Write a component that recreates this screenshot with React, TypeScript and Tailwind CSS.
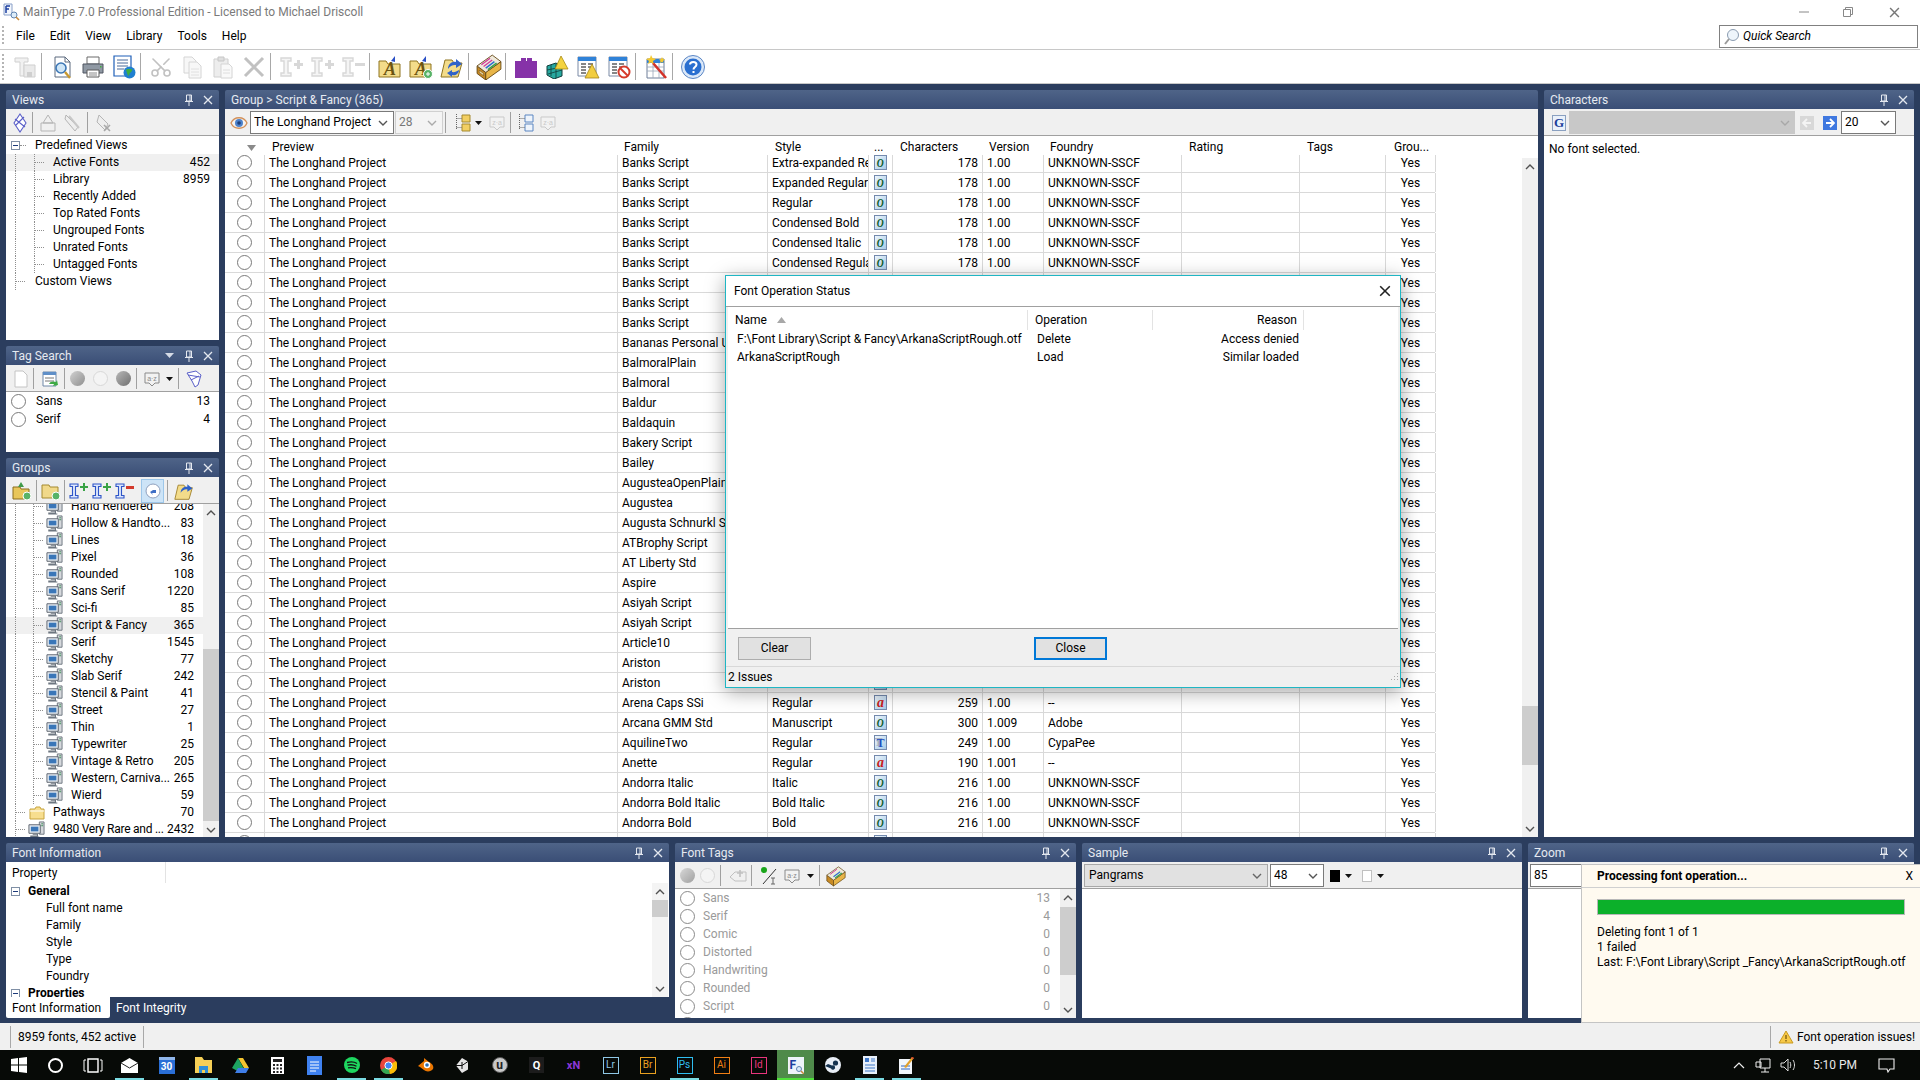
import type { ReactNode } from 'react';
import { Scissors } from 'lucide-react';

type Row = { family: string; style?: string; icon?: 'o' | 'a' | 't'; chars?: number; version?: string; foundry?: string };

const hiddenFamilies = [
  'Banks Script', 'Banks Script', 'Banks Script', 'Bananas Personal Use', 'BalmoralPlain', 'Balmoral', 'Baldur', 'Baldaquin',
  'Bakery Script', 'Bailey', 'AugusteaOpenPlain', 'Augustea', 'Augusta Schnurkl Script', 'ATBrophy Script', 'AT Liberty Std',
  'Aspire', 'Asiyah Script', 'Asiyah Script', 'Article10', 'Ariston', 'Ariston',
];

const fontRows: Row[] = [
  { family: 'Banks Script', style: 'Extra-expanded Regular', icon: 'o', chars: 178, version: '1.00', foundry: 'UNKNOWN-SSCF' },
  { family: 'Banks Script', style: 'Expanded Regular', icon: 'o', chars: 178, version: '1.00', foundry: 'UNKNOWN-SSCF' },
  { family: 'Banks Script', style: 'Regular', icon: 'o', chars: 178, version: '1.00', foundry: 'UNKNOWN-SSCF' },
  { family: 'Banks Script', style: 'Condensed Bold', icon: 'o', chars: 178, version: '1.00', foundry: 'UNKNOWN-SSCF' },
  { family: 'Banks Script', style: 'Condensed Italic', icon: 'o', chars: 178, version: '1.00', foundry: 'UNKNOWN-SSCF' },
  { family: 'Banks Script', style: 'Condensed Regular', icon: 'o', chars: 178, version: '1.00', foundry: 'UNKNOWN-SSCF' },
  ...hiddenFamilies.map((family): Row => ({ family, icon: 'o' })),
  { family: 'Arena Caps SSi', style: 'Regular', icon: 'a', chars: 259, version: '1.00', foundry: '--' },
  { family: 'Arcana GMM Std', style: 'Manuscript', icon: 'o', chars: 300, version: '1.009', foundry: 'Adobe' },
  { family: 'AquilineTwo', style: 'Regular', icon: 't', chars: 249, version: '1.00', foundry: 'CypaPee' },
  { family: 'Anette', style: 'Regular', icon: 'a', chars: 190, version: '1.001', foundry: '--' },
  { family: 'Andorra Italic', style: 'Italic', icon: 'o', chars: 216, version: '1.00', foundry: 'UNKNOWN-SSCF' },
  { family: 'Andorra Bold Italic', style: 'Bold Italic', icon: 'o', chars: 216, version: '1.00', foundry: 'UNKNOWN-SSCF' },
  { family: 'Andorra Bold', style: 'Bold', icon: 'o', chars: 216, version: '1.00', foundry: 'UNKNOWN-SSCF' },
];

const groups: [string, number][] = [
  ['Hand Rendered', 208], ['Hollow & Handto...', 83], ['Lines', 18], ['Pixel', 36], ['Rounded', 108], ['Sans Serif', 1220],
  ['Sci-fi', 85], ['Script & Fancy', 365], ['Serif', 1545], ['Sketchy', 77], ['Slab Serif', 242], ['Stencil & Paint', 41],
  ['Street', 27], ['Thin', 1], ['Typewriter', 25], ['Vintage & Retro', 205], ['Western, Carniva...', 265], ['Wierd', 59],
];

const views: [string, number?][] = [
  ['Active Fonts', 452], ['Library', 8959], ['Recently Added'], ['Top Rated Fonts'], ['Ungrouped Fonts'], ['Unrated Fonts'], ['Untagged Fonts'],
];

const fontTags: [string, number][] = [
  ['Sans', 13], ['Serif', 4], ['Comic', 0], ['Distorted', 0], ['Handwriting', 0], ['Rounded', 0], ['Script', 0],
];

function Svg({ size = 24, children }: { size?: number; children: ReactNode }) {
  return <svg width={size} height={size} viewBox="0 0 24 24" className="shrink-0">{children}</svg>;
}

function Pin() {
  return (
    <svg width="10" height="12" viewBox="0 0 10 12">
      <path d="M2.5 1h5v6h-5zM6 1v6M1 7.5h8M5 8v4" fill="none" stroke="#e4e8ef" strokeWidth="1" />
    </svg>
  );
}

function CloseX({ color = '#e4e8ef', size = 10 }: { color?: string; size?: number }) {
  return (
    <svg width={size} height={size} viewBox="0 0 10 10">
      <path d="M1 1l8 8M9 1l-8 8" stroke={color} strokeWidth="1.3" fill="none" />
    </svg>
  );
}

function Chevron({ dir = 'down', color = '#666' }: { dir?: 'up' | 'down'; color?: string }) {
  return (
    <svg width="10" height="6" viewBox="0 0 10 6" className="shrink-0">
      <path d={dir === 'down' ? 'M1 1l4 4 4-4' : 'M1 5l4-4 4 4'} fill="none" stroke={color} strokeWidth="1.4" />
    </svg>
  );
}

function Caret() {
  return <svg width="7" height="4" viewBox="0 0 7 4" className="shrink-0"><path d="M0 0h7L3.5 4z" fill="#111" /></svg>;
}

function Gripper({ className }: { className: string }) {
  return <span className={`block w-[2px] shrink-0 border-l-2 border-dotted border-[#b4b4b4] ${className}`} />;
}

function Radio({ dim }: { dim?: boolean }) {
  return <span className={`block w-[15px] h-[15px] shrink-0 rounded-full border-[1.5px] bg-white ${dim ? 'border-[#8a8a8a]' : 'border-[#7a7a7a]'}`} />;
}

function Panel({ title, caret, className, children }: { title: string; caret?: boolean; className: string; children: ReactNode }) {
  return (
    <section className={`flex flex-col min-h-0 ${className}`}>
      <header className="h-[19px] shrink-0 flex items-center pl-[6px] pr-[6px] rounded-t-[2px] bg-gradient-to-b from-[#4f6488] to-[#3a4e76] text-[#e6eaf1]">
        <span className="flex-1 truncate pt-px">{title}</span>
        {caret && <svg width="9" height="5" viewBox="0 0 9 5" className="mr-[10px]"><path d="M0 0h9L4.5 5z" fill="#d5dbe6" /></svg>}
        {title !== 'Group > Script & Fancy (365)' && (
          <span className="flex items-center gap-[9px]"><Pin /><CloseX /></span>
        )}
      </header>
      {children}
    </section>
  );
}

function PanelBar({ className = '', children }: { className?: string; children?: ReactNode }) {
  return <div className={`h-[27px] shrink-0 flex items-center pt-px bg-[#f0f0f0] border-b border-[#a0a0a0] ${className}`}>{children}</div>;
}

function Sep({ className = 'mx-[3px]' }: { className?: string }) {
  return <span className={`block w-px h-[21px] shrink-0 bg-[#a0a0a0] ${className}`} />;
}

function ScrollBar({ before, thumb, className = '' }: { before: number; thumb: number; className?: string }) {
  return (
    <div className={`w-4 shrink-0 flex flex-col bg-[#f0f0f0] ${className}`}>
      <div className="h-[17px] shrink-0 flex items-center justify-center"><Chevron dir="up" color="#505050" /></div>
      <div className="shrink-0" style={{ height: before }} />
      <div className="shrink-0 bg-[#cdcdcd]" style={{ height: thumb }} />
      <div className="flex-1" />
      <div className="h-[17px] shrink-0 flex items-center justify-center"><Chevron color="#505050" /></div>
    </div>
  );
}

function FontKind({ kind }: { kind?: Row['icon'] }) {
  const letter = kind === 'a' ? 'a' : kind === 't' ? 'T' : 'O';
  const look =
    kind === 'a'
      ? 'italic text-[14px] text-[#c8201c]'
      : kind === 't'
        ? 'text-[12px] text-[#1f4fc0] [text-shadow:-2px_-1px_0_#a8b0bc]'
        : 'italic text-[12px] text-[#0b5a2a] scale-x-[0.8]';
  return (
    <span className="w-[13px] h-[15px] flex items-center justify-center overflow-hidden border border-[#7389ad] bg-gradient-to-br from-[#eef5fb] to-[#a6cbe8]">
      <span className={`block leading-none font-black [font-family:'Liberation_Serif',serif] ${look}`}>{kind ? letter : ''}</span>
    </span>
  );
}

function Doc({ fill = '#fff', stroke = '#9a9a9a' }: { fill?: string; stroke?: string }) {
  return <path d="M5 2h10l5 5v15H5z M15 2v5h5" fill={fill} stroke={stroke} strokeWidth="1" />;
}

function IBeam({ sign, color = '#c8c8c8', signColor = '#c8c8c8' }: { sign: '+' | '-'; color?: string; signColor?: string }) {
  return (
    <Svg>
      <path d="M2 3h10v3H9v12h3v3H2v-3h3V6H2z" fill="#f2f2f2" stroke={color} strokeWidth="1.4" />
      {sign === '+' ? (
        <path d="M15 8h3V5h3v3h3v3h-3v3h-3v-3h-3z" fill={signColor} />
      ) : (
        <path d="M14 8h10v3H14z" fill={signColor} />
      )}
    </Svg>
  );
}

function FolderA({ plus }: { plus?: boolean }) {
  return (
    <Svg>
      <path d="M1 6h7l2 3h12v13H1z" fill="#f3dc8a" stroke="#8f7420" strokeWidth="1" />
      <text x="6" y="20" fontSize="18" fontWeight="bold" fontStyle="italic" fontFamily="Liberation Serif" fill="#6b5412">A</text>
      <path d="M17 1l-4 5 4 1z" fill="#2a4fc5" />
      {plus && <><circle cx="19" cy="19" r="4.5" fill="#58b368" stroke="#fff" /><path d="M17 19h4M19 17v4" stroke="#fff" /></>}
    </Svg>
  );
}

function FolderOpenArrow() {
  return (
    <Svg>
      <path d="M5 5h7l2 3h8l-4 14H1z" fill="#f3dc8a" stroke="#8f7420" strokeWidth="1" />
      <path d="M8 14c0-5 4-8 8-7V4l6 5-6 4v-3c-3-.5-6 1-8 4z" fill="#2f62c9" />
      <path d="M19 15c0 4-4 6-7 5v2l-5-4 5-3v2c2 .5 5-.5 7-2z" fill="#2f62c9" />
    </Svg>
  );
}

function Crate() {
  return (
    <Svg size={26}>
      <path d="M1 11L9 17v7L1 18z" fill="#c88a24" stroke="#5f4210" strokeWidth=".8" />
      <path d="M9 17L23 7v7L9 24z" fill="#e8b548" stroke="#5f4210" strokeWidth=".8" />
      <path d="M1 11L15 1l8 6L9 17z" fill="#efeadb" stroke="#5f4210" strokeWidth=".8" />
      <path d="M5 10l8-6M7 11.5l8-6" stroke="#d03a9a" strokeWidth="1.2" />
      <path d="M9 13l8-6" stroke="#2c6fd0" strokeWidth="1.4" />
      <path d="M11 14.5l8-6" stroke="#38a04a" strokeWidth="1.4" />
      <path d="M3 15l4 3v2l-4-3z" fill="#f6e3ad" stroke="#5f4210" strokeWidth=".5" />
    </Svg>
  );
}

function TableDoc({ badge }: { badge: 'warn' | 'no' }) {
  return (
    <Svg>
      <path d="M2 2h18v19H2z" fill="#fff" stroke="#7a8aa5" strokeWidth="1" />
      <path d="M2 2h18v4H2z" fill="#2f82d8" />
      <path d="M5 9h5M5 12h5M5 15h5M5 18h5M12 9h5M12 12h5" stroke="#5f5f5f" strokeWidth="1.3" />
      {badge === 'warn' ? (
        <path d="M16 9l7 14H9z" fill="#f2cd3f" stroke="#a58416" strokeWidth=".8" />
      ) : (
        <><circle cx="17" cy="17" r="5.5" fill="#fff" stroke="#d63b2b" strokeWidth="2" /><path d="M13 13l8 8" stroke="#d63b2b" strokeWidth="2" /></>
      )}
    </Svg>
  );
}

function Monitor({ size = 18 }: { size?: number }) {
  return (
    <svg width={size} height={size} viewBox="0 0 18 18" className="shrink-0">
      <path d="M12 1h5v13h-5z" fill="#d5d8dc" stroke="#6d7680" />
      <path d="M14 3h2M14 5h2" stroke="#3a8a55" />
      <path d="M1 4h12v9H1z" fill="#e8edf3" stroke="#59616b" />
      <path d="M3 6h8v5H3z" fill="#3a76b8" />
      <path d="M5 14h5v2H3v1h9" fill="none" stroke="#6d7680" strokeWidth="1.2" />
    </svg>
  );
}

function Guide({ line = true, stub, w }: { line?: boolean; stub?: number; w: string }) {
  return (
    <span className={`h-full shrink-0 flex items-center ${w} ${line ? 'border-l border-dotted border-[#8f8f8f]' : ''}`}>
      {stub ? <span className="block border-t border-dotted border-[#8f8f8f]" style={{ width: stub }} /> : null}
    </span>
  );
}

function Slot({ disabled, children }: { disabled?: boolean; children: ReactNode }) {
  return <div className={`w-[31px] shrink-0 flex items-center justify-center ${disabled ? 'opacity-70' : ''}`}>{children}</div>;
}

function TopSep() {
  return <span className="block w-px h-[27px] ml-px mr-1 shrink-0 bg-[#a8a8a8]" />;
}

function MainToolbar() {
  return (
    <div className="h-[34px] shrink-0 flex items-center pl-[2px] bg-white border-b border-[#c8c8c8]">
      <Gripper className="h-[26px] mr-[5px]" />
      <Slot disabled>
        <Svg><path d="M2 3h13v4h-4v14H7V7H2z" fill="#ececec" stroke="#bdbdbd" /><path d="M11 10h11v12H11z" fill="#e2e2e2" stroke="#bdbdbd" /><path d="M14 17h5v5h-5z" fill="#bcbcbc" /></Svg>
      </Slot>
      <TopSep />
      <Slot>
        <Svg><Doc stroke="#5d6b7e" /><circle cx="11" cy="13" r="5" fill="#cfe6f7" stroke="#3c76b5" strokeWidth="1.6" /><path d="M15 17l5 6" stroke="#c9992f" strokeWidth="2.4" /></Svg>
      </Slot>
      <Slot>
        <Svg><path d="M6 2h12v7H6z" fill="#fff" stroke="#6a6a6a" /><path d="M2 9h20v9H2z" fill="#8f98a3" stroke="#4f5560" /><path d="M6 15h12v7H6z" fill="#fff" stroke="#5a5a5a" /><path d="M8 18h8M8 20h8" stroke="#8a8a8a" /><path d="M19 11h1.5v1.5H19z" fill="#3fae3f" /></Svg>
      </Slot>
      <Slot>
        <Svg><path d="M2 1h17v20H2z" fill="#fff" stroke="#1f5fb8" strokeWidth="1.2" /><path d="M5 5h11M5 8h11M5 11h11M5 14h7" stroke="#4a6a9a" /><circle cx="17.5" cy="17.5" r="6" fill="#1f7fd0" /><path d="M14 15c2-2 5 0 6-1 1 3-3 3-3 7-2-1-2-4-3-6z" fill="#3fae3f" /></Svg>
      </Slot>
      <TopSep />
      <Slot disabled><Scissors size={24} strokeWidth={1.6} color="#a8a8a8" className="-rotate-90" /></Slot>
      <Slot disabled>
        <Svg><path d="M4 2h8l4 4v12H4z" fill="#f5f5f5" stroke="#c4c4c4" /><path d="M9 7h8l4 4v12H9z" fill="#f5f5f5" stroke="#c4c4c4" /><path d="M11 14h8M11 17h8M11 20h8" stroke="#d2d2d2" /></Svg>
      </Slot>
      <Slot disabled>
        <Svg><path d="M3 4h14v18H3z" fill="#e6e6e6" stroke="#bdbdbd" /><path d="M7 2h6v4H7z" fill="#d2d2d2" stroke="#b0b0b0" /><path d="M10 9h8l3 3v11H10z" fill="#f7f7f7" stroke="#c4c4c4" /><path d="M12 15h7M12 18h7" stroke="#d0d0d0" /></Svg>
      </Slot>
      <Slot disabled><svg width="22" height="22" viewBox="0 0 22 22"><path d="M2 2l18 18M20 2L2 20" stroke="#a8a8a8" strokeWidth="3" /></svg></Slot>
      <TopSep />
      <Slot disabled><IBeam sign="+" /></Slot>
      <Slot disabled><IBeam sign="+" /></Slot>
      <Slot disabled><IBeam sign="-" /></Slot>
      <TopSep />
      <Slot><FolderA /></Slot>
      <Slot><FolderA plus /></Slot>
      <Slot><FolderOpenArrow /></Slot>
      <TopSep />
      <Slot><Crate /></Slot>
      <TopSep />
      <Slot>
        <Svg><path d="M1 6h6V3h5v3h1V3h5v3h5v17H1z" fill="#8632a8" /></Svg>
      </Slot>
      <Slot>
        <Svg><path d="M2 11l9-3 6 4v9l-8 3-7-4z" fill="#27a9a0" stroke="#103c3a" /><path d="M6 10v11M11 9v14M2 15l15-3M3 19l14-4" stroke="#103c3a" strokeWidth=".8" /><path d="M16 1l7 13H10z" fill="#f4d33f" stroke="#a88a14" strokeWidth=".8" /></Svg>
      </Slot>
      <Slot><TableDoc badge="warn" /></Slot>
      <Slot><TableDoc badge="no" /></Slot>
      <TopSep />
      <Slot>
        <Svg><path d="M3 4h17v19H3z" fill="#fff" stroke="#6f7f99" /><path d="M3 4h17v4H3z" fill="#2f82d8" /><path d="M3 12h17M3 16h17M9 8v15M15 8v15" stroke="#9aa6b8" strokeWidth=".8" /><path d="M9 8l13 15" stroke="#d2322a" strokeWidth="2.6" /><path d="M7 0l1.5 3L12 4 9 6l.5 3L7 7.5 4 9l1-3-3-2 4-1zM18 2l1 2 2 .5-2 1.5.5 2-1.5-1-2 1 .5-2-1.5-1.5 2-.5z" fill="#f4c82f" /></Svg>
      </Slot>
      <TopSep />
      <Slot>
        <Svg><circle cx="12" cy="12" r="11.5" fill="#dbe8f8" stroke="#5a86c5" /><circle cx="12" cy="12" r="8.5" fill="#2a6fd0" /><path d="M9 9.5c0-3.5 6.5-3.5 6.5 0 0 2.5-3 2.5-3 5" fill="none" stroke="#fff" strokeWidth="2" /><path d="M11.5 16h2v2h-2z" fill="#fff" /></Svg>
      </Slot>
    </div>
  );
}

function Combo({ value, className, disabled }: { value: string; className: string; disabled?: boolean }) {
  return (
    <div className={`h-[23px] shrink-0 flex items-center pl-[3px] pr-[5px] border ${disabled ? 'border-[#d0d0d0] bg-[#f4f4f4] text-[#777]' : 'border-[#7a7a7a] bg-white'} ${className}`}>
      <span className="flex-1 truncate">{value}</span>
      <Chevron color={disabled ? '#aaa' : '#555'} />
    </div>
  );
}

function SmallGlyph({ tone = '#c9c9c9', label = 'z·a' }: { tone?: string; label?: string }) {
  return (
    <svg width="18" height="18" viewBox="0 0 18 18" className="shrink-0">
      <path d="M2 3h14v10h-4l-3 3-3-3H2z" fill="#f2f2f2" stroke={tone} />
      <text x="9" y="10.5" textAnchor="middle" fontSize="7" fontFamily="Liberation Sans" fill={tone}>{label}</text>
    </svg>
  );
}

function ViewsPanel() {
  return (
    <Panel title="Views" className="h-[250px]">
      <PanelBar className="pl-[6px]">
        <svg width="16" height="20" viewBox="0 0 16 20"><path d="M8 1l6 9-6 9-6-9zM3 6l10 8M4 12l8-8" fill="#fff" stroke="#5a5fc8" strokeWidth="1.1" /></svg>
        <Sep className="ml-[4px] mr-[6px]" />
        <svg width="18" height="20" viewBox="0 0 18 20"><path d="M2 10h14v8H2zM9 2l5 8H4z" fill="#f0f0f0" stroke="#b5b5b5" /></svg>
        <svg width="20" height="20" viewBox="0 0 20 20" className="ml-[6px]"><path d="M3 2l12 12-3 4L2 6z" fill="#eee" stroke="#b5b5b5" /><path d="M6 3l10 12" stroke="#c8c8c8" strokeWidth="2" /></svg>
        <Sep className="ml-[4px] mr-[6px]" />
        <svg width="18" height="20" viewBox="0 0 18 20"><path d="M5 2l9 9-3 6-8-8z" fill="#eee" stroke="#b5b5b5" /><path d="M10 12l6 6M16 12l-6 6" stroke="#a8a8a8" strokeWidth="1.6" /></svg>
      </PanelBar>
      <div className="flex-1 bg-white pt-px">
        <div className="h-[17px] flex items-center pl-[5px]">
          <span className="w-[9px] h-[9px] shrink-0 border border-[#7f8fa5] flex items-center justify-center"><span className="block w-[5px] h-px bg-[#1c3a7a]" /></span>
          <span className="w-[6px] border-t border-dotted border-[#8f8f8f]" />
          <span className="ml-[9px]">Predefined Views</span>
        </div>
        {views.map(([name, count], i) => (
          <div key={name} className={`h-[17px] flex items-center pl-[9px] pr-[9px] ${i === 0 ? 'bg-[#f0f0f0]' : ''}`}>
            <Guide w="w-[19px]" />
            <Guide w="w-[19px]" stub={9} />
            <span className="flex-1">{name}</span>
            {count && <span>{count}</span>}
          </div>
        ))}
        <div className="h-[17px] flex items-center pl-[9px]">
          <Guide w="w-[20px]" stub={9} />
          <span>Custom Views</span>
        </div>
      </div>
    </Panel>
  );
}

function TagSearchPanel() {
  return (
    <Panel title="Tag Search" caret className="h-[106px]">
      <PanelBar className="pl-[8px]">
        <svg width="14" height="18" viewBox="0 0 14 18"><path d="M1 1h8l4 4v12H1z" fill="#fff" stroke="#c4c4c4" /></svg>
        <Sep className="ml-[5px] mr-[7px]" />
        <svg width="18" height="18" viewBox="0 0 18 18"><path d="M2 2h13v14H2z" fill="#fff" stroke="#6f88a8" /><path d="M2 2h13v3H2z" fill="#5f8fc8" /><path d="M4 8h9M4 11h9" stroke="#777" /><path d="M8 14c1-3 5-3 7-2l1-2 1 5-5 1 1-2c-2 0-4 0-5 0z" fill="#3faa45" /></svg>
        <Sep className="ml-[5px] mr-[5px]" />
        <span className="w-[15px] h-[15px] rounded-full bg-gradient-to-br from-[#d2d2d2] to-[#8f8f8f]" />
        <span className="w-[15px] h-[15px] ml-[8px] rounded-full bg-[#f4f4f4] border border-[#d8d8d8]" />
        <span className="w-[15px] h-[15px] ml-[8px] rounded-full bg-gradient-to-br from-[#b8b8b8] to-[#707070]" />
        <Sep className="ml-[5px] mr-[6px]" />
        <SmallGlyph tone="#8a8a8a" label="a·z" />
        <span className="ml-[5px]"><Caret /></span>
        <Sep className="ml-[5px] mr-[6px]" />
        <svg width="18" height="20" viewBox="0 0 18 20"><path d="M2 4l9-2 5 4-3 10-3 2-3-6z" fill="#fff" stroke="#5a5fc8" /><path d="M3 6l12 2M6 11l8-4" stroke="#5a5fc8" /></svg>
      </PanelBar>
      <div className="flex-1 bg-white">
        {[['Sans', 13], ['Serif', 4]].map(([name, count]) => (
          <div key={name} className="h-[18px] flex items-center pl-[5px] pr-[9px]">
            <Radio />
            <span className="ml-[10px] flex-1">{name}</span>
            <span>{count}</span>
          </div>
        ))}
      </div>
    </Panel>
  );
}

function BlueI({ children }: { children: ReactNode }) {
  return (
    <svg width="20" height="18" viewBox="0 0 20 18" className="shrink-0">
      <path d="M1 2h8v2.5H6.5v9H9V16H1v-2.500h2.500v-9H1z" fill="#dce6fb" stroke="#2f55c8" strokeWidth="1.1" />
      {children}
    </svg>
  );
}

function GroupsPanel() {
  return (
    <Panel title="Groups" className="flex-1">
      <PanelBar className="pl-[6px]">
        <svg width="20" height="20" viewBox="0 0 20 20"><path d="M1 6h7l1 2h8v10H1z" fill="#e8c65a" stroke="#8a6d1e" /><path d="M6 6l3-5 3 5z" fill="#3f9a4a" /><circle cx="15" cy="15" r="4" fill="#58b368" stroke="#fff" /></svg>
        <Sep className="ml-[4px] mr-[4px]" />
        <svg width="20" height="20" viewBox="0 0 20 20"><path d="M1 4h7l1 2h8v11H1z" fill="#f1d98a" stroke="#a58a30" /><circle cx="15" cy="15" r="4" fill="#58b368" stroke="#fff" /></svg>
        <Sep className="ml-[3px] mr-[4px]" />
        <BlueI><path d="M11 4h3V1h2v3h3v2h-3v3h-2V6h-3z" fill="#3aa346" /></BlueI>
        <span className="ml-[3px]"><BlueI><path d="M11 4h3V1h2v3h3v2h-3v3h-2V6h-3z" fill="#3aa346" /></BlueI></span>
        <span className="ml-[3px]"><BlueI><path d="M11 4h8v3h-8z" fill="#d33a2c" /></BlueI></span>
        <div className="ml-[6px] w-[23px] h-[24px] flex items-center justify-center bg-[#cde4f7] border border-[#9dc7ea]">
          <svg width="16" height="16" viewBox="0 0 16 16"><circle cx="8" cy="8" r="7" fill="#fff" stroke="#8fa0bd" /><path d="M4 7h7v3H7l1 2-3-3 3-2H4z" fill="#3f6fc5" /></svg>
        </div>
        <Sep className="ml-[3px] mr-[6px]" />
        <svg width="20" height="20" viewBox="0 0 24 24"><path d="M5 5h7l2 3h8l-4 14H1z" fill="#f3dc8a" stroke="#9a7a20" /><path d="M8 14c0-5 4-8 8-7V4l6 5-6 4v-3c-3-.5-6 1-8 4z" fill="#2f62c9" /></svg>
      </PanelBar>
      <div className="flex-1 flex min-h-0 bg-white">
        <div className="w-[197px] shrink-0 overflow-hidden">
          <div className="-mt-[6px]">
            {groups.map(([name, count]) => (
              <div key={name} className={`h-[17px] flex items-center pl-[9px] pr-[9px] ${name === 'Script & Fancy' ? 'bg-[#f0f0f0]' : ''}`}>
                <Guide w="w-[18px]" />
                <Guide w="w-[13px]" stub={9} />
                <Monitor size={17} />
                <span className="ml-[8px] flex-1 whitespace-nowrap">{name}</span>
                <span>{count}</span>
              </div>
            ))}
            <div className="h-[17px] flex items-center pl-[9px] pr-[9px]">
              <Guide w="w-[14px]" stub={9} />
              <svg width="16" height="14" viewBox="0 0 16 14" className="shrink-0"><path d="M1 3h5l1-2h4l1 2h3v10H1z" fill="#f7de8f" stroke="#c7a43f" /><path d="M1 5h14" stroke="#fff" /></svg>
              <span className="ml-[8px] flex-1">Pathways</span>
              <span>70</span>
            </div>
            <div className="h-[17px] flex items-center pl-[9px] pr-[9px]">
              <Guide w="w-[13px]" stub={9} />
              <Monitor size={17} />
              <span className="ml-[8px] flex-1 whitespace-nowrap tracking-[-0.25px]">9480 Very Rare and ...</span>
              <span>2432</span>
            </div>
          </div>
        </div>
        <ScrollBar before={128} thumb={172} />
      </div>
    </Panel>
  );
}

const colClass = {
  radio: 'w-[40px]',
  preview: 'w-[353px]',
  family: 'w-[150px]',
  style: 'w-[101px]',
  icon: 'w-[24px]',
  chars: 'w-[90px]',
  version: 'w-[61px]',
  foundry: 'w-[138px]',
  rating: 'w-[118px]',
  tags: 'w-[86px]',
  group: 'w-[50px]',
};

function FontTable() {
  const cell = 'h-full shrink-0 flex items-center border-r border-[#d9d9d9] overflow-hidden whitespace-nowrap';
  const text = `${cell} pt-px`;
  const head = 'shrink-0 flex items-center h-full pt-[4px]';
  return (
    <div className="flex-1 flex min-h-0 bg-white">
      <div className="w-[1297px] flex flex-col min-h-0">
        <div className="h-[19px] shrink-0 flex items-center">
          <div className={`${head} ${colClass.radio} justify-end pr-[9px]`}>
            <svg width="9" height="6" viewBox="0 0 9 6"><path d="M0 0h9L4.5 6z" fill="#8a8a8a" /></svg>
          </div>
          <div className={`${head} ${colClass.preview} pl-[7px]`}>Preview</div>
          <div className={`${head} ${colClass.family} pl-[6px]`}>Family</div>
          <div className={`${head} ${colClass.style} pl-[7px]`}>Style</div>
          <div className={`${head} ${colClass.icon} pl-[5px]`}>...</div>
          <div className={`${head} ${colClass.chars} pl-[7px]`}>Characters</div>
          <div className={`${head} ${colClass.version} pl-[6px]`}>Version</div>
          <div className={`${head} ${colClass.foundry} pl-[6px]`}>Foundry</div>
          <div className={`${head} ${colClass.rating} pl-[7px]`}>Rating</div>
          <div className={`${head} ${colClass.tags} pl-[7px]`}>Tags</div>
          <div className={`${head} ${colClass.group} pl-[8px]`}>Grou...</div>
        </div>
        <div className="flex-1 overflow-hidden">
          <div className="-mt-[2px]">
            {[...fontRows, { family: '' } as Row].map((row, i) => (
              <div key={i} className="w-[1210px] h-5 flex items-center border-b border-[#d9d9d9]">
                <div className={`${cell} ${colClass.radio} justify-center`}><Radio /></div>
                <div className={`${text} ${colClass.preview} pl-[4px]`}>{row.family && 'The Longhand Project'}</div>
                <div className={`${text} ${colClass.family} pl-[4px]`}>{row.family}</div>
                <div className={`${text} ${colClass.style} pl-[4px]`}>{row.style}</div>
                <div className={`${cell} ${colClass.icon} justify-center`}><FontKind kind={row.icon} /></div>
                <div className={`${text} ${colClass.chars} justify-end pr-[4px]`}>{row.chars}</div>
                <div className={`${text} ${colClass.version} pl-[4px]`}>{row.version}</div>
                <div className={`${text} ${colClass.foundry} pl-[4px]`}>{row.foundry}</div>
                <div className={`${cell} ${colClass.rating}`} />
                <div className={`${cell} ${colClass.tags}`} />
                <div className={`${text} ${colClass.group} justify-center`}>{row.family && 'Yes'}</div>
              </div>
            ))}
          </div>
        </div>
      </div>
      <div className="flex flex-col pt-[22px]">
        <ScrollBar before={531} thumb={59} className="flex-1" />
      </div>
    </div>
  );
}

function TreeBoxes({ fill, stroke }: { fill: string; stroke: string }) {
  return (
    <svg width="16" height="20" viewBox="0 0 16 20" className="shrink-0">
      <path d="M7 2h8v7H7zM7 11h8v7H7z" fill={fill} stroke={stroke} />
      <path d="M1.500 1v15M1.500 5.500H7M1.500 14.500H7" stroke="#666" strokeDasharray="1 1" fill="none" />
    </svg>
  );
}

function CenterPanel() {
  return (
    <Panel title="Group > Script & Fancy (365)" className="w-[1313px] shrink-0 h-full">
      <PanelBar className="pl-[5px]">
        <svg width="18" height="14" viewBox="0 0 18 14" className="shrink-0"><path d="M1 7c3-7 13-7 16 0-3 7-13 7-16 0z" fill="#f6f2ee" stroke="#d2905a" strokeWidth="1.3" /><circle cx="9" cy="7" r="4" fill="#4c82cc" /><circle cx="9" cy="7" r="1.800" fill="#1d3f7a" /></svg>
        <Combo value="The Longhand Project" className="w-[144px] ml-[2px] text-black" />
        <Combo value="28" disabled className="w-[48px] ml-px" />
        <Sep className="ml-[2px] mr-[9px]" />
        <TreeBoxes fill="#f2cf63" stroke="#a58a30" />
        <span className="ml-[4px]"><Caret /></span>
        <span className="ml-[6px]"><SmallGlyph /></span>
        <Sep className="ml-[4px] mr-[7px]" />
        <TreeBoxes fill="#eef4fb" stroke="#5b86c2" />
        <span className="ml-[5px]"><SmallGlyph /></span>
      </PanelBar>
      <FontTable />
    </Panel>
  );
}

function CharactersPanel() {
  return (
    <Panel title="Characters" className="flex-1 h-full">
      <PanelBar className="pl-[8px]">
        <span className="w-[14px] h-[16px] flex items-center justify-center border border-[#8aa0c0] bg-[#eaf1fa] text-[#1d3f9a] font-bold text-[13px] leading-none [font-family:'Liberation_Serif',serif]">G</span>
        <div className="ml-[3px] w-[226px] h-[23px] flex items-center justify-end pr-[5px] bg-[#c8c8c8]"><Chevron color="#a8a8a8" /></div>
        <span className="ml-[5px] w-[14px] h-[14px] flex items-center justify-center bg-[#d8d8d8]">
          <svg width="10" height="10" viewBox="0 0 10 10"><path d="M5 1L1 5l4 4M1 5h8" stroke="#f4f4f4" strokeWidth="1.8" fill="none" /></svg>
        </span>
        <span className="ml-[9px] w-[14px] h-[14px] flex items-center justify-center bg-[#3f78e0]">
          <svg width="10" height="10" viewBox="0 0 10 10"><path d="M5 1l4 4-4 4M9 5H1" stroke="#fff" strokeWidth="1.8" fill="none" /></svg>
        </span>
        <Combo value="20" className="w-[55px] ml-[4px]" />
      </PanelBar>
      <div className="flex-1 bg-white pl-[5px] pt-[6px]">No font selected.</div>
    </Panel>
  );
}

function FontInfoPanel() {
  const fields = ['Full font name', 'Family', 'Style', 'Type', 'Foundry'];
  const minus = (
    <span className="w-[9px] h-[9px] shrink-0 border border-[#7f8fa5] flex items-center justify-center"><span className="block w-[5px] h-px bg-[#1c3a7a]" /></span>
  );
  return (
    <Panel title="Font Information" className="w-[663px] shrink-0 h-full">
      <div className="flex-1 flex flex-col min-h-0 bg-white">
        <div className="h-[21px] shrink-0 flex items-center">
          <span className="w-[160px] h-full flex items-center pt-px pl-[6px] border-r border-[#e3e3e3]">Property</span>
        </div>
        <div className="flex-1 flex min-h-0">
          <div className="flex-1 overflow-hidden">
            <div className="h-[17px] flex items-center pl-[5px] font-bold">{minus}<span className="ml-[8px]">General</span></div>
            {fields.map((f) => <div key={f} className="h-[17px] flex items-center pl-[40px]">{f}</div>)}
            <div className="h-[17px] flex items-center pl-[5px] font-bold">{minus}<span className="ml-[8px]">Properties</span></div>
          </div>
          <ScrollBar before={0} thumb={17} className="bg-[#f4f4f4] mr-px" />
        </div>
      </div>
      <div className="h-[21px] shrink-0 flex text-white">
        <span className="w-[104px] flex items-center pt-px pl-[6px] bg-white text-black rounded-b-[2px]">Font Information</span>
        <span className="flex items-center pt-px pl-[6px]">Font Integrity</span>
      </div>
    </Panel>
  );
}

function FontTagsPanel() {
  return (
    <Panel title="Font Tags" className="w-[401px] shrink-0 h-full">
      <PanelBar className="pl-[5px]">
        <span className="w-[15px] h-[15px] rounded-full bg-gradient-to-br from-[#d8d8d8] to-[#a0a0a0]" />
        <span className="w-[15px] h-[15px] ml-[5px] rounded-full bg-[#f4f4f4] border border-[#d8d8d8]" />
        <Sep className="ml-[5px] mr-[8px]" />
        <svg width="18" height="16" viewBox="0 0 18 16" className="shrink-0"><path d="M1 9l5-5h11v9H6z" fill="#f0f0f0" stroke="#c0c0c0" /><path d="M11 2v7M8 5h6" stroke="#c0c0c0" strokeWidth="1.6" /></svg>
        <Sep className="ml-[4px] mr-[8px]" />
        <svg width="18" height="20" viewBox="0 0 18 20" className="shrink-0"><circle cx="4" cy="4" r="3" fill="#1aa51a" /><path d="M16 3L3 18" stroke="#333" /><path d="M11 12h4M13 12v6M11 18h4" stroke="#666" fill="none" /></svg>
        <span className="ml-[5px]"><SmallGlyph tone="#8a8a8a" label="a·z" /></span>
        <span className="ml-[6px]"><Caret /></span>
        <Sep className="ml-[5px] mr-[6px]" />
        <svg width="20" height="22" viewBox="0 0 24 24" className="shrink-0"><path d="M1 11L9 17v7L1 18z" fill="#c88a24" stroke="#5f4210" strokeWidth=".8" /><path d="M9 17L23 7v7L9 24z" fill="#e8b548" stroke="#5f4210" strokeWidth=".8" /><path d="M1 11L15 1l8 6L9 17z" fill="#efeadb" stroke="#5f4210" strokeWidth=".8" /><path d="M9 13l8-6" stroke="#2c6fd0" strokeWidth="1.400" /><path d="M11 14.500l8-6" stroke="#38a04a" strokeWidth="1.400" /><path d="M5 10l8-6" stroke="#d03a9a" strokeWidth="1.200" /></svg>
      </PanelBar>
      <div className="flex-1 flex min-h-0 bg-white">
        <div className="flex-1 overflow-hidden text-[#9a9a9a]">
          {[...fontTags, ['', -1] as [string, number]].map(([name, count], i) => (
            <div key={i} className="h-[18px] flex items-center pl-[5px] pr-[10px]">
              <Radio dim />
              <span className="ml-[8px] flex-1">{name}</span>
              {count >= 0 && <span>{count}</span>}
            </div>
          ))}
        </div>
        <ScrollBar before={1} thumb={68} />
      </div>
    </Panel>
  );
}

function SamplePanel() {
  return (
    <Panel title="Sample" className="w-[440px] shrink-0 h-full">
      <PanelBar className="pl-[2px]">
        <div className="w-[184px] h-[23px] shrink-0 flex items-center pl-[4px] pr-[5px] border border-[#a8a8a8] bg-[#e1e1e1]">
          <span className="flex-1">Pangrams</span>
          <Chevron />
        </div>
        <Combo value="48" className="w-[54px] ml-[2px]" />
        <span className="ml-[6px] w-[10px] h-[12px] bg-black" />
        <span className="ml-[5px]"><Caret /></span>
        <span className="ml-[10px] w-[10px] h-[12px] bg-white border border-[#c0c0c0]" />
        <span className="ml-[5px]"><Caret /></span>
      </PanelBar>
      <div className="flex-1 bg-white" />
    </Panel>
  );
}

function ZoomPanel() {
  return (
    <Panel title="Zoom" className="flex-1 h-full">
      <PanelBar className="pl-[2px]">
        <div className="w-[60px] h-[23px] flex items-center pl-[3px] border border-[#7a7a7a] bg-white">85</div>
      </PanelBar>
      <div className="flex-1 bg-white" />
    </Panel>
  );
}

function StatusDialog() {
  return (
    <div className="absolute left-[725px] top-[275px] w-[676px] h-[413px] flex flex-col bg-[#f0f0f0] border border-[#1fb6c4] shadow-[0_4px_18px_rgba(0,0,0,0.35)]">
      <div className="h-[31px] shrink-0 flex items-center pl-[8px] pr-[9px] bg-white border-b border-[#a0a0a0]">
        <span className="flex-1">Font Operation Status</span>
        <CloseX color="#222" size={12} />
      </div>
      <div className="h-[322px] shrink-0 ml-[2px] mr-[2px] bg-white border-b border-[#a0a0a0]">
        <div className="h-[23px] pt-[3px] flex items-center">
          <span className="w-[300px] h-full flex items-center pl-[7px] border-r border-[#e3e3e3]">
            Name
            <svg width="9" height="6" viewBox="0 0 9 6" className="ml-[10px]"><path d="M0 6h9L4.5 0z" fill="#a8a8a8" /></svg>
          </span>
          <span className="w-[125px] h-full flex items-center pl-[7px] border-r border-[#e3e3e3]">Operation</span>
          <span className="w-[151px] h-full flex items-center justify-end pr-[6px] border-r border-[#e3e3e3]">Reason</span>
        </div>
        <div className="h-[18px] flex items-center">
          <span className="w-[300px] pl-[9px] whitespace-nowrap">F:\Font Library\Script &amp; Fancy\ArkanaScriptRough.otf</span>
          <span className="w-[125px] pl-[9px]">Delete</span>
          <span className="w-[151px] text-right pr-[5px]">Access denied</span>
        </div>
        <div className="h-[18px] flex items-center">
          <span className="w-[300px] pl-[9px]">ArkanaScriptRough</span>
          <span className="w-[125px] pl-[9px]">Load</span>
          <span className="w-[151px] text-right pr-[5px]">Similar loaded</span>
        </div>
      </div>
      <div className="h-[38px] shrink-0 flex items-start pt-[8px] pl-[12px] border-b border-[#d8d8d8]">
        <button className="w-[73px] h-[23px] bg-[#e1e1e1] border border-[#adadad]">Clear</button>
        <button className="ml-[223px] w-[73px] h-[23px] bg-[#e1e1e1] border-2 border-[#0078d7]">Close</button>
      </div>
      <div className="flex-1 flex items-center justify-between pl-[2px] pr-[1px]">
        <span>2 Issues</span>
        <svg width="10" height="10" viewBox="0 0 10 10"><path d="M8 1h1v1H8zM5 4h1v1H5zM8 4h1v1H8zM2 7h1v1H2zM5 7h1v1H5zM8 7h1v1H8z" fill="#a8a8a8" /></svg>
      </div>
    </div>
  );
}

function ProgressPopup() {
  return (
    <div className="absolute right-0 top-[864px] w-[339px] h-[159px] flex flex-col bg-[#fffaf0] border-l border-t border-b border-[#c4c4c4]">
      <div className="h-[23px] shrink-0 flex items-center pl-[15px] pr-[7px] border-b border-[#d0d0d0]">
        <span className="flex-1 font-bold">Processing font operation...</span>
        <span>X</span>
      </div>
      <div className="px-[15px] pt-[11px]">
        <div className="h-[16px] w-[308px] bg-[#0cb02a] border border-[#b8b8b8]" />
        <div className="mt-[10px] leading-[15px]">
          <div>Deleting font 1 of 1</div>
          <div>1 failed</div>
          <div className="whitespace-nowrap">Last: F:\Font Library\Script _Fancy\ArkanaScriptRough.otf</div>
        </div>
      </div>
    </div>
  );
}

function AppBadge({ label, color }: { label: string; color: string }) {
  return (
    <span className="w-[16px] h-[17px] flex items-center justify-center border text-[10px] leading-none" style={{ borderColor: color, color }}>{label}</span>
  );
}

const taskbarIcons: { node: ReactNode; running?: boolean; active?: boolean }[] = [
  { node: <svg width="16" height="16" viewBox="0 0 16 16"><path d="M0 2l7-1v6.5H0zM8 1l8-1v7.5H8zM0 8.5h7V15l-7-1zM8 8.5h8V16l-8-1z" fill="#fff" /></svg> },
  { node: <span className="block w-[15px] h-[15px] rounded-full border-[2.5px] border-white" /> },
  { node: <svg width="20" height="15" viewBox="0 0 20 15"><path d="M5 1h10v13H5z" fill="none" stroke="#fff" strokeWidth="1.4" /><path d="M3 2H1v11h2M17 2h2v11h-2" fill="none" stroke="#fff" /></svg> },
  { running: true, node: <svg width="17" height="15" viewBox="0 0 17 15"><path d="M0 5l8.5-5L17 5v10H0z" fill="#fff" /><path d="M0 5l8.5 5L17 5" fill="none" stroke="#222" /></svg> },
  { node: <span className="w-[16px] h-[17px] flex items-center justify-center bg-[#2a6fd6] border-t-[3px] border-[#8fb6ea] text-white text-[10px] font-bold leading-none">30</span> },
  { running: true, node: <svg width="17" height="16" viewBox="0 0 17 16"><path d="M0 0h7l2 3h8v13H0z" fill="#f5cf56" /><path d="M4 9h9v7h-3v-3H7v3H4z" fill="#2e8fd8" /></svg> },
  { node: <svg width="17" height="15" viewBox="0 0 17 15"><path d="M6 0h5l6 10h-5z" fill="#f4c430" /><path d="M6 0l5.5 10-2.5 5L0 10z" fill="#1da462" /><path d="M3 15l3-5h11l-3 5z" fill="#3f7ee8" /></svg> },
  { node: <svg width="13" height="17" viewBox="0 0 13 17"><path d="M0 0h13v17H0z" fill="#fff" /><path d="M2 2h9v3H2z" fill="#222" /><path d="M2 7h2v2H2zM5.5 7h2v2h-2zM9 7h2v2H9zM2 10.500h2v2H2zM5.500 10.500h2v2h-2zM9 10.500h2v2H9zM2 14h2v2H2zM5.500 14h2v2h-2zM9 14h2v2H9z" fill="#222" /></svg> },
  { node: <svg width="15" height="19" viewBox="0 0 15 19"><path d="M0 0h15v19H0z" fill="#3f82f0" /><path d="M3 6h9M3 9h9M3 12h9M3 15h6" stroke="#fff" /></svg> },
  { running: true, node: <svg width="16" height="16" viewBox="0 0 16 16"><circle cx="8" cy="8" r="8" fill="#1ed760" /><path d="M3 5.5c4-1 7-1 10 1M3.5 8.2c3-.8 6-.6 9 1M4 10.8c3-.6 5-.4 8 .8" stroke="#111" strokeWidth="1.3" fill="none" /></svg> },
  { running: true, node: <svg width="17" height="17" viewBox="0 0 17 17"><circle cx="8.5" cy="8.5" r="8.5" fill="#e8453c" /><path d="M8.5 8.5L1 13a8.5 8.5 0 0 0 9 3.9z" fill="#34a853" /><path d="M8.5 8.5L10 17a8.5 8.5 0 0 0 6-13z" fill="#fbbc05" /><circle cx="8.5" cy="8.5" r="3.6" fill="#4285f4" stroke="#fff" /></svg> },
  { node: <svg width="16" height="14" viewBox="0 0 16 14"><path d="M0 8l6-5V0l5 4c4 2 5 5 4 7-2 3-7 3-9 1L2 9z" fill="#ea7600" /><circle cx="9" cy="7" r="3.2" fill="#fff" /><circle cx="9" cy="7" r="1.8" fill="#2a6fb5" /></svg> },
  { node: <svg width="13" height="15" viewBox="0 0 13 15"><path d="M6 0l6 3.5v8L6 15 0 7.5z" fill="#e6e6e6" /><path d="M6 4v7M6 7.5l6-4M6 7.5L0 7.5" stroke="#111" /></svg> },
  { node: <span className="w-[16px] h-[16px] rounded-full flex items-center justify-center bg-[#c8c8c8] border border-[#555] text-[#222] text-[12px] font-bold leading-none">u</span> },
  { node: <span className="w-[15px] h-[16px] flex items-center justify-center bg-[#1c1c1c] text-white text-[11px] font-bold leading-none">Q</span> },
  { node: <span className="text-[#8a38d8] text-[11px] font-bold leading-none">xN</span> },
  { node: <AppBadge label="Lr" color="#8fc8e6" /> },
  { node: <AppBadge label="Br" color="#e8a020" /> },
  { running: true, node: <AppBadge label="Ps" color="#2fbef0" /> },
  { node: <AppBadge label="Ai" color="#f07f14" /> },
  { node: <AppBadge label="Id" color="#e8357c" /> },
  {
    running: true,
    active: true,
    node: (
      <span className="relative w-[16px] h-[17px] flex items-center justify-start pl-[2px] bg-[#eef3fa] text-[#1d3fa0] text-[12px] font-bold leading-none">
        F
        <svg width="9" height="9" viewBox="0 0 9 9" className="absolute right-0 bottom-0"><circle cx="4" cy="4" r="2.500" fill="#dcecf9" stroke="#5f83b0" /><path d="M6 6l3 3" stroke="#c98a3a" strokeWidth="1.500" /></svg>
      </span>
    ),
  },
  { node: <svg width="16" height="16" viewBox="0 0 16 16"><circle cx="8" cy="8" r="8" fill="#e8eef6" /><circle cx="10.5" cy="6" r="2.6" fill="#14324f" /><path d="M0 9l6 2.5a2.2 2.2 0 1 0 1-3L3 7z" fill="#14324f" /></svg> },
  { running: true, node: <svg width="14" height="18" viewBox="0 0 14 18"><path d="M0 0h14v18H0z" fill="#e8f0fa" /><path d="M2 2h4v4H2z" fill="#3f78c8" /><path d="M8 3h4M8 5h4M2 9h10M2 12h10M2 15h10" stroke="#3f78c8" /></svg> },
  { running: true, node: <svg width="15" height="18" viewBox="0 0 15 18"><path d="M0 3h13v15H0z" fill="#f2f6fb" /><path d="M2 10h9M2 13h9" stroke="#2f66c4" /><path d="M5 11l8-10 2 1-8 10z" fill="#e2a02a" /><path d="M13 1l2 1-1 1-2-1z" fill="#d83a2c" /></svg> },
];

function Taskbar() {
  return (
    <div className="h-[30px] shrink-0 flex items-center bg-[#070a07] text-[#e8e8e8]">
      {taskbarIcons.map((item, i) => (
        <div key={i} className={`relative w-[37px] h-full shrink-0 flex items-center justify-center ${item.active ? 'bg-[#4f8a4a]' : ''}`}>
          {item.node}
          {item.running && <span className={`absolute bottom-0 h-[2px] ${item.active ? 'bg-[#4fe03a] left-0 right-0' : 'bg-[#7adbe2] left-[4px] right-[4px]'}`} />}
        </div>
      ))}
      <div className="flex-1" />
      <svg width="12" height="7" viewBox="0 0 12 7" className="shrink-0"><path d="M1 6l5-5 5 5" fill="none" stroke="#eee" strokeWidth="1.2" /></svg>
      <svg width="16" height="15" viewBox="0 0 16 15" className="ml-[10px] shrink-0"><path d="M5 1h10v9H5zM1 4h5v5H1zM10 10v4M6 14h8" fill="none" stroke="#eee" /></svg>
      <svg width="16" height="14" viewBox="0 0 16 14" className="ml-[9px] shrink-0"><path d="M1 5h3l4-4v12L4 9H1zM10 4c1 2 1 4 0 6M13 2c2 3 2 7 0 10" fill="none" stroke="#ddd" /></svg>
      <span className="ml-[14px] w-[50px] text-center text-[12px]">5:10 PM</span>
      <svg width="17" height="15" viewBox="0 0 17 15" className="ml-[18px] mr-[25px] shrink-0"><path d="M1 1h15v10h-4l-2 3-1-3H1z" fill="none" stroke="#eee" strokeWidth="1.1" /></svg>
    </div>
  );
}

export default function App() {
  return (
    <div className="relative w-[1920px] h-[1080px] overflow-hidden flex flex-col bg-[#f0f0f0] text-black text-[12px] leading-[15px] [font-family:Roboto,sans-serif]">
      <div className="h-[24px] shrink-0 flex items-center bg-white pl-[3px]">
        <svg width="18" height="18" viewBox="0 0 18 18" className="shrink-0">
          <path d="M1 1h8v11H1z" fill="#f2f6fc" stroke="#8aa0c8" />
          <path d="M3 3h4M3 3v7M3 6h3" stroke="#1d3fa0" strokeWidth="1.5" fill="none" />
          <circle cx="11" cy="12" r="3" fill="#dcecf9" stroke="#5f83b0" />
          <path d="M13 14l3 3" stroke="#c98a3a" strokeWidth="1.6" />
        </svg>
        <span className="ml-[2px] flex-1 text-[#7a7a7a]">MainType 7.0 Professional Edition - Licensed to Michael Driscoll</span>
        <svg width="10" height="2" viewBox="0 0 10 2" className="mr-[34px]"><path d="M0 1h10" stroke="#888" /></svg>
        <svg width="10" height="10" viewBox="0 0 10 10" className="mr-[36px]"><path d="M.5 2.5h7v7h-7zM2.5 2.5v-2h7v7h-2" fill="none" stroke="#888" /></svg>
        <span className="mr-[20px]"><CloseX color="#777" size={11} /></span>
      </div>
      <div className="h-[26px] shrink-0 flex items-start bg-white border-b border-[#c8c8c8] pl-[2px] pr-[2px]">
        <Gripper className="h-[18px] mt-[2px] mr-[12px]" />
        <nav className="flex-1 h-[25px] flex items-center gap-[15px]">
          {['File', 'Edit', 'View', 'Library', 'Tools', 'Help'].map((m) => <span key={m}>{m}</span>)}
        </nav>
        <div className="w-[199px] h-[23px] mt-px flex items-center pl-[3px] border border-[#808080] bg-white italic">
          <svg width="17" height="18" viewBox="0 0 17 18" className="shrink-0"><circle cx="10" cy="7" r="5.5" fill="#eef5fb" stroke="#8a9bb0" /><path d="M6 11l-4 5" stroke="#9a9a9a" strokeWidth="2" /></svg>
          <span className="ml-[3px]">Quick Search</span>
        </div>
      </div>
      <MainToolbar />
      <div className="flex-1 min-h-0 flex flex-col gap-[6px] bg-[#2b3d5e] px-[6px] pt-[6px] pb-[5px]">
        <div className="h-[747px] shrink-0 flex gap-[6px]">
          <div className="w-[213px] shrink-0 flex flex-col gap-[6px]">
            <ViewsPanel />
            <TagSearchPanel />
            <GroupsPanel />
          </div>
          <CenterPanel />
          <CharactersPanel />
        </div>
        <div className="flex-1 min-h-0 flex gap-[6px]">
          <FontInfoPanel />
          <FontTagsPanel />
          <SamplePanel />
          <ZoomPanel />
        </div>
      </div>
      <div className="h-[27px] shrink-0 flex items-center pt-px bg-[#f0f0f0] pl-[10px] pr-[5px]">
        <span className="h-[22px] flex items-center px-[7px] border-x border-[#a8a8a8]">8959 fonts, 452 active</span>
        <div className="flex-1" />
        <span className="h-[22px] flex items-center pl-[7px] border-l border-[#a8a8a8]">
          <svg width="16" height="14" viewBox="0 0 16 14"><path d="M8 1l7 12H1z" fill="#f7c948" stroke="#c99a20" /><path d="M8 5v4M8 10v1.5" stroke="#7a5a10" strokeWidth="1.3" /></svg>
          <span className="ml-[3px]">Font operation issues!</span>
        </span>
      </div>
      <Taskbar />
      <StatusDialog />
      <ProgressPopup />
    </div>
  );
}
